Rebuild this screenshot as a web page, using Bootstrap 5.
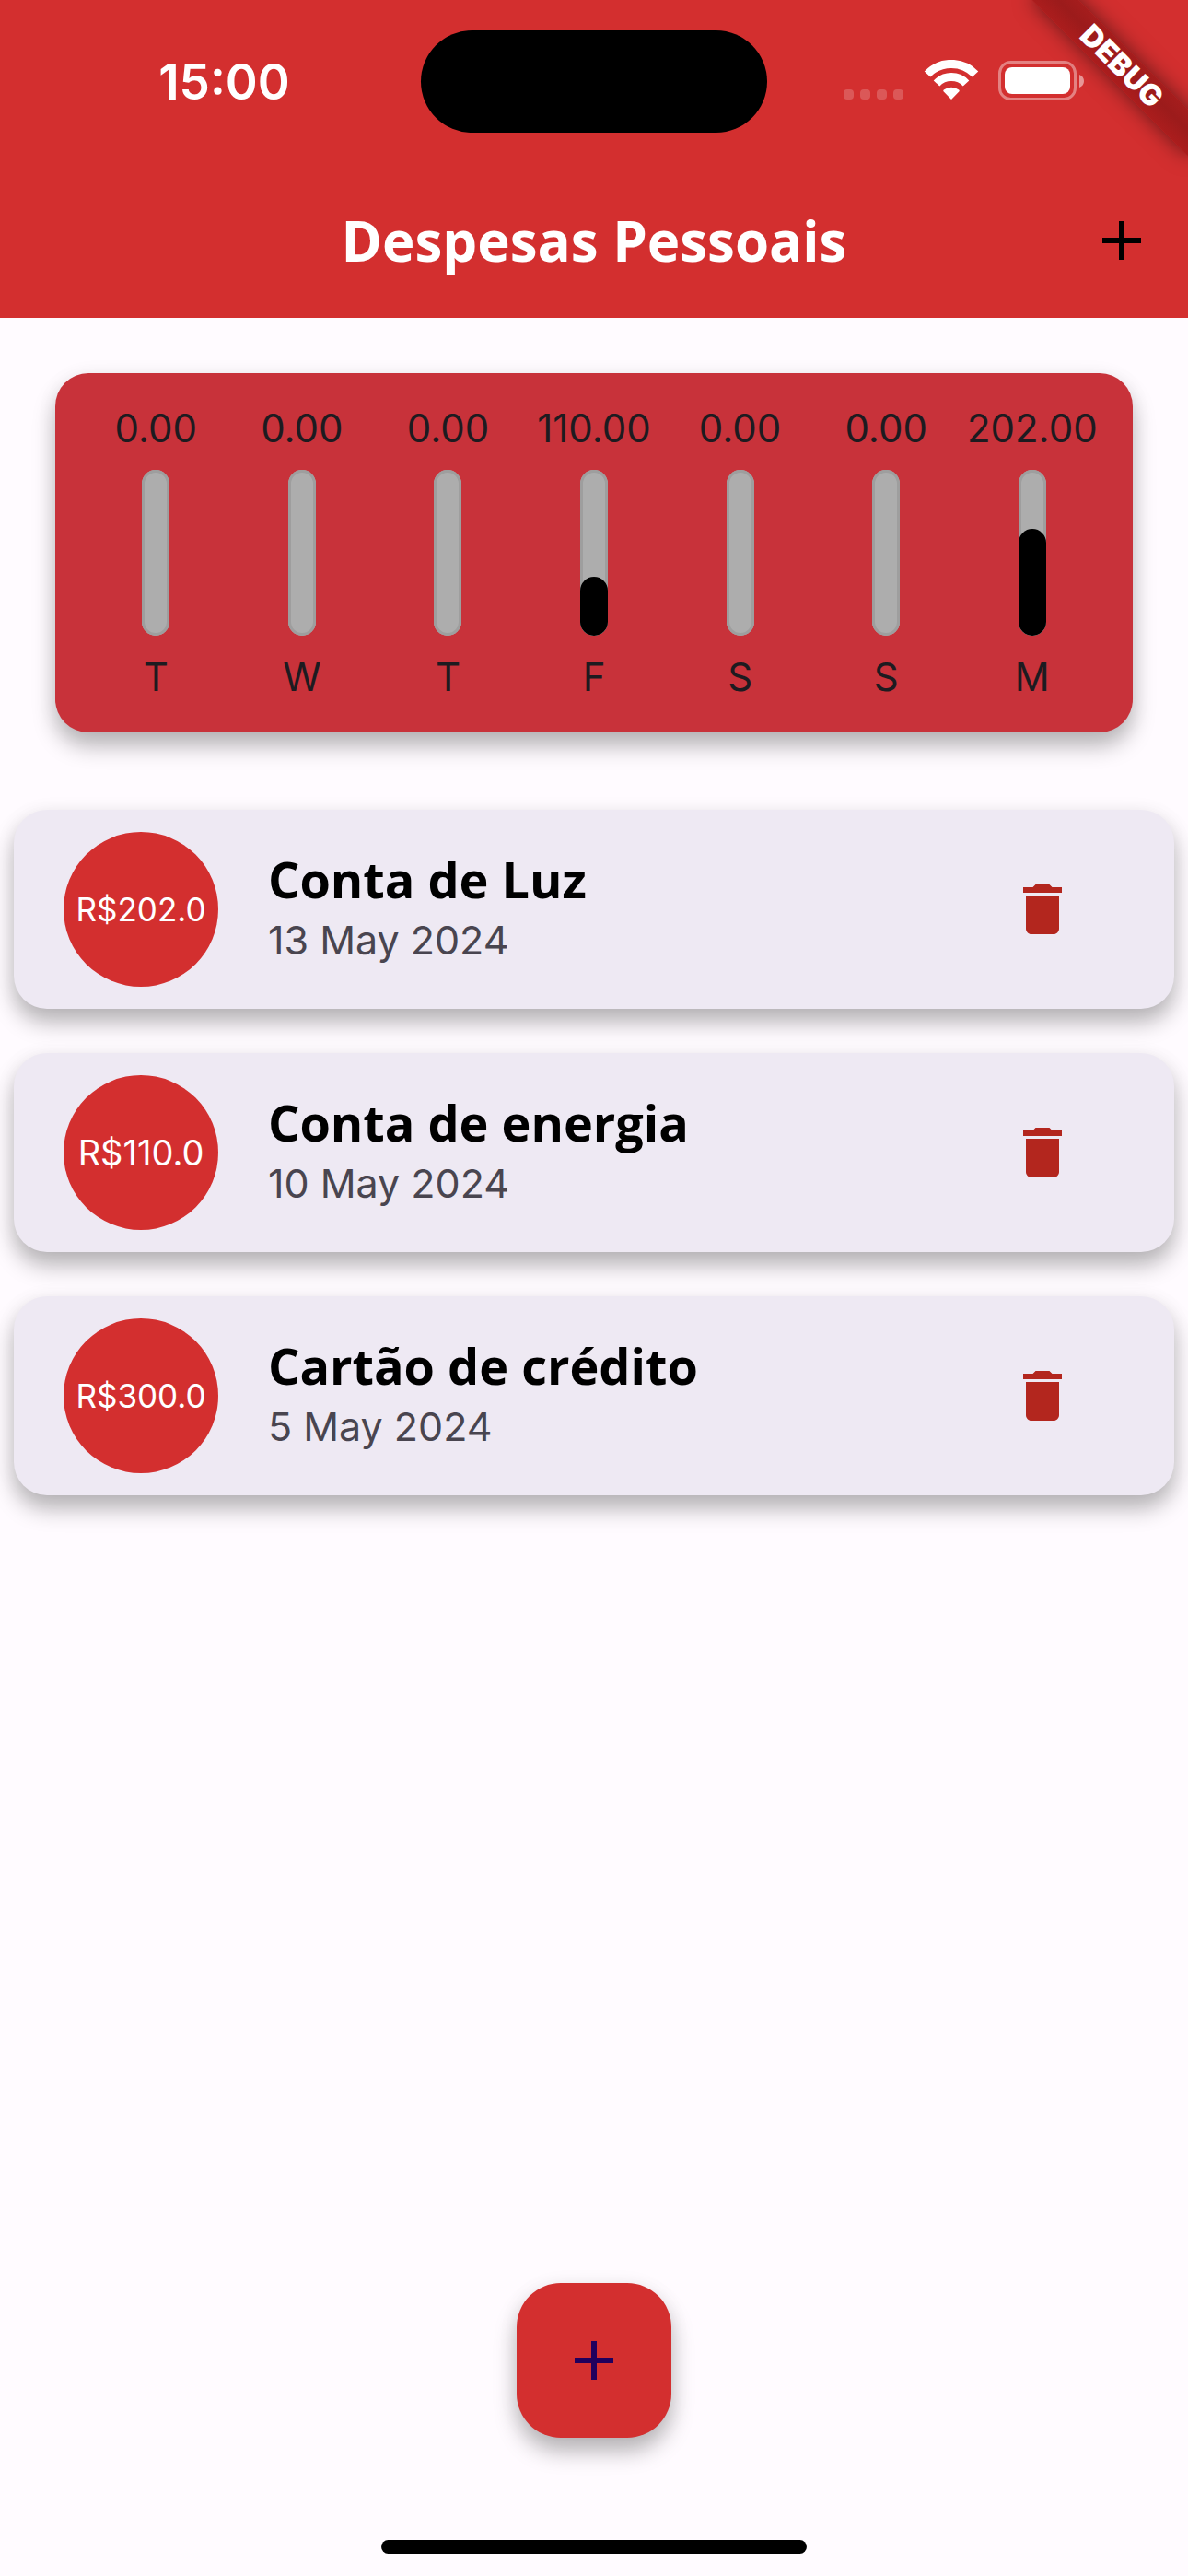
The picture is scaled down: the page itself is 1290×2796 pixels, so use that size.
<!DOCTYPE html>
<html lang="pt-BR">
<head>
<meta charset="utf-8">
<meta name="viewport" content="width=device-width, initial-scale=1">
<title>Despesas Pessoais</title>
<link href="https://cdn.jsdelivr.net/npm/bootstrap@5.3.0/dist/css/bootstrap.min.css" rel="stylesheet">
<style>
  :root { --app-red: #d32f2f; --elev: 0 15px 24px rgba(0,0,0,.27), 0 3px 24px rgba(0,0,0,.05); }
  body { background: #fffbff; color: #1d1b20; font-family: Inter, "Liberation Sans", sans-serif; font-size: 42px; line-height: 60px; }
  .app-header { background: var(--app-red); }
  .status-bar { height: 177px; padding: 0 30px; }
  .clock { font-size: 53px; font-weight: 600; }
  .island { width: 376px; height: 111px; }
  .app-bar { height: 168px; padding: 0 36px; }
  .app-title { font-family: "Open Sans", sans-serif; font-size: 60px; line-height: 84px; }
  .icon-btn { width: 72px; height: 72px; }
  .debug-ribbon { top: 54px; right: -48px; width: 240px; height: 36px; transform: rotate(45deg); background: linear-gradient(#a51d1d, #9c1b1b 45%, #ab1d1d); box-shadow: 0 0 22px rgba(0,0,0,.5); font-size: 32px; font-weight: 900; line-height: 36px; }
  .chart-card { margin: 60px 60px 0; padding: 30px; border-radius: 36px; background: #c8323a; box-shadow: var(--elev); }
  .day-col { flex: 1 1 0; gap: 15px; }
  .meter { width: 30px; height: 180px; border-radius: 15px; background: #adadad; box-shadow: inset 0 0 0 3px #9e9e9e; }
  .meter-fill { border-radius: 15px; background: #000; }
  .expense-list { margin-top: 84px; padding: 0 15px; gap: 48px; }
  .expense { height: 216px; padding: 0 107px 0 54px; gap: 54px; border-radius: 36px; background: #eee9f3; box-shadow: var(--elev); }
  .amount { width: 168px; height: 168px; background: var(--app-red); font-size: 35px; }
  .amount-wide { font-size: 38px; }
  .expense-text { padding-bottom: 7px; }
  .expense-name { font-family: "Open Sans", sans-serif; font-size: 54px; line-height: 72px; }
  .expense-date { color: #49454f; font-size: 43px; }
  .fab { width: 168px; height: 168px; border-radius: 48px; background: var(--app-red); box-shadow: var(--elev); }
  .home-bar { width: 462px; height: 15px; margin: 111px 0 24px; }
</style>
</head>
<body>
<div class="d-flex flex-column min-vh-100">
  <header class="app-header position-relative overflow-hidden text-white">
    <div class="status-bar d-flex align-items-center">
      <div class="clock flex-fill w-25 text-center">15:00</div>
      <div class="island flex-shrink-0 rounded-pill bg-black"></div>
      <div class="flex-fill w-25 d-flex justify-content-center">
        <svg width="262" height="48" viewBox="0 2 262 48" fill="#fff" aria-hidden="true">
          <g fill-opacity=".2"><rect x="0" y="34" width="11" height="11" rx="4"/><rect x="18" y="34" width="11" height="11" rx="4"/><rect x="36" y="34" width="11" height="11" rx="4"/><rect x="54" y="34" width="11" height="11" rx="4"/></g>
          <g fill="none" stroke="#fff" stroke-width="9"><path d="M91 17.500A36 36 0 0 1 143 17.500"/><path d="M101 27.500A22 22 0 0 1 133 27.500"/></g>
          <path d="M117 45l-8.500-8.700q-.7-1 .3-1.700a13 13 0 0 1 16.400 0q1 .7.300 1.700z"/>
          <rect x="169.500" y="4.500" width="82" height="40" rx="12" fill="none" stroke="#fff" stroke-opacity=".4" stroke-width="3"/>
          <rect x="175" y="10" width="71" height="29" rx="8"/>
          <path d="M256 18q5 2 5 7t-5 7z" fill-opacity=".5"/>
        </svg>
      </div>
    </div>
    <nav class="app-bar d-flex align-items-center" aria-label="Principal">
      <span class="icon-btn flex-shrink-0"></span>
      <h1 class="app-title flex-fill text-center fw-bold m-0">Despesas Pessoais</h1>
      <button type="button" class="icon-btn btn p-0 border-0 d-flex flex-shrink-0" aria-label="Adicionar despesa">
        <svg width="72" height="72" viewBox="0 0 24 24" fill="#000"><path d="M19 13h-6v6h-2v-6H5v-2h6V5h2v6h6z"/></svg>
      </button>
    </nav>
    <div class="debug-ribbon position-absolute text-center">DEBUG</div>
  </header>

  <main>
    <section class="chart-card d-flex" aria-label="Gastos da semana">
      <div class="day-col d-flex flex-column align-items-center"><span>0.00</span><div class="meter"></div><span>T</span></div>
      <div class="day-col d-flex flex-column align-items-center"><span>0.00</span><div class="meter"></div><span>W</span></div>
      <div class="day-col d-flex flex-column align-items-center"><span>0.00</span><div class="meter"></div><span>T</span></div>
      <div class="day-col d-flex flex-column align-items-center"><span>110.00</span><div class="meter d-flex align-items-end"><div class="meter-fill w-100" style="height:35.3%"></div></div><span>F</span></div>
      <div class="day-col d-flex flex-column align-items-center"><span>0.00</span><div class="meter"></div><span>S</span></div>
      <div class="day-col d-flex flex-column align-items-center"><span>0.00</span><div class="meter"></div><span>S</span></div>
      <div class="day-col d-flex flex-column align-items-center"><span>202.00</span><div class="meter d-flex align-items-end"><div class="meter-fill w-100" style="height:64.7%"></div></div><span>M</span></div>
    </section>

    <ul class="expense-list list-unstyled d-flex flex-column mb-0">
      <li class="expense d-flex align-items-center">
        <div class="amount rounded-circle text-white d-flex align-items-center justify-content-center flex-shrink-0">R$202.0</div>
        <div class="expense-text flex-fill"><h2 class="expense-name fw-bold text-black m-0">Conta de Luz</h2><div class="expense-date">13 May 2024</div></div>
        <button type="button" class="icon-btn btn p-0 border-0 d-flex flex-shrink-0" aria-label="Excluir Conta de Luz"><svg width="72" height="72" viewBox="0 0 24 24" fill="#b3261e"><path d="M6 19c0 1.100.9 2 2 2h8c1.100 0 2-.9 2-2V7H6zM19 4h-3.500l-1-1h-5l-1 1H5v2h14z"/></svg></button>
      </li>
      <li class="expense d-flex align-items-center">
        <div class="amount amount-wide rounded-circle text-white d-flex align-items-center justify-content-center flex-shrink-0">R$110.0</div>
        <div class="expense-text flex-fill"><h2 class="expense-name fw-bold text-black m-0">Conta de energia</h2><div class="expense-date">10 May 2024</div></div>
        <button type="button" class="icon-btn btn p-0 border-0 d-flex flex-shrink-0" aria-label="Excluir Conta de energia"><svg width="72" height="72" viewBox="0 0 24 24" fill="#b3261e"><path d="M6 19c0 1.100.9 2 2 2h8c1.100 0 2-.9 2-2V7H6zM19 4h-3.500l-1-1h-5l-1 1H5v2h14z"/></svg></button>
      </li>
      <li class="expense d-flex align-items-center">
        <div class="amount rounded-circle text-white d-flex align-items-center justify-content-center flex-shrink-0">R$300.0</div>
        <div class="expense-text flex-fill"><h2 class="expense-name fw-bold text-black m-0">Cartão de crédito</h2><div class="expense-date">5 May 2024</div></div>
        <button type="button" class="icon-btn btn p-0 border-0 d-flex flex-shrink-0" aria-label="Excluir Cartão de crédito"><svg width="72" height="72" viewBox="0 0 24 24" fill="#b3261e"><path d="M6 19c0 1.100.9 2 2 2h8c1.100 0 2-.9 2-2V7H6zM19 4h-3.500l-1-1h-5l-1 1H5v2h14z"/></svg></button>
      </li>
    </ul>
  </main>

  <footer class="mt-auto d-flex flex-column align-items-center">
    <button type="button" class="fab btn border-0 p-0 d-flex align-items-center justify-content-center" aria-label="Nova despesa">
      <svg width="72" height="72" viewBox="0 0 24 24" fill="#21005d"><path d="M19 13h-6v6h-2v-6H5v-2h6V5h2v6h6z"/></svg>
    </button>
    <div class="home-bar rounded-pill bg-black"></div>
  </footer>
</div>
<script src="https://cdn.jsdelivr.net/npm/bootstrap@5.3.0/dist/js/bootstrap.bundle.min.js"></script>
</body>
</html>
